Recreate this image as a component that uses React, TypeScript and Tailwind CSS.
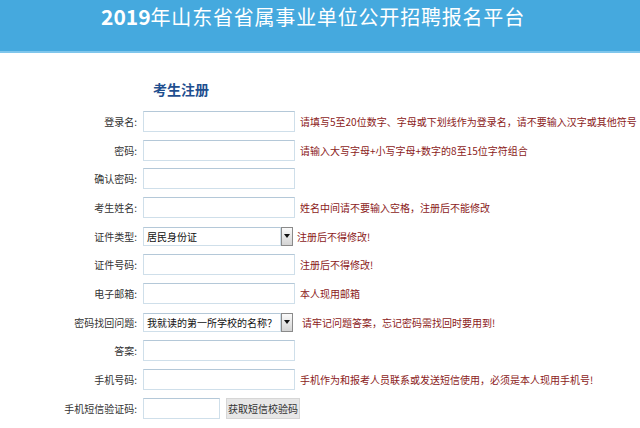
const cjk = "font-['Noto_Sans_CJK_SC','Noto_Sans',sans-serif]";

type Row = {
  label: string;
  kind: "input" | "select" | "sms";
  value?: string;
  hint?: string;
  wide?: boolean;
};

const rows: Row[] = [
  { label: "登录名:", kind: "input", hint: "请填写5至20位数字、字母或下划线作为登录名，请不要输入汉字或其他符号" },
  { label: "密码:", kind: "input", hint: "请输入大写字母+小写字母+数字的8至15位字符组合" },
  { label: "确认密码:", kind: "input" },
  { label: "考生姓名:", kind: "input", hint: "姓名中间请不要输入空格，注册后不能修改" },
  { label: "证件类型:", kind: "select", value: "居民身份证", hint: "注册后不得修改!" },
  { label: "证件号码:", kind: "input", hint: "注册后不得修改!" },
  { label: "电子邮箱:", kind: "input", hint: "本人现用邮箱" },
  { label: "密码找回问题:", kind: "select", value: "我就读的第一所学校的名称？", hint: "请牢记问题答案，忘记密码需找回时要用到!", wide: true },
  { label: "答案:", kind: "input" },
  { label: "手机号码:", kind: "input", hint: "手机作为和报考人员联系或发送短信使用，必须是本人现用手机号!" },
  { label: "手机短信验证码:", kind: "sms" },
];

function Field({ row }: { row: Row }) {
  if (row.kind === "select") {
    return (
      <div className="flex items-center">
        <div className="flex h-[19px] w-[138px] items-center border border-[#cfdfea] border-t-[#b4c8d8] bg-white pl-[3px] text-[10px] text-[#111]">
          {row.value}
        </div>
        <div className="flex h-[19px] w-[12px] items-center justify-center border border-[#8a8a8a] bg-gradient-to-b from-[#fafafa] to-[#d4d4d4]">
          <svg width="6" height="4" viewBox="0 0 6 4">
            <path d="M0 0 L6 0 L3 4 Z" fill="#111" />
          </svg>
        </div>
      </div>
    );
  }
  if (row.kind === "sms") {
    return (
      <div className="flex items-center gap-[6px]">
        <input className="h-[21px] w-[77px] border border-[#cfdfea] border-t-[#b4c8d8] bg-white outline-none" />
        <button className="h-[21px] w-[74px] border border-[#d6d6d6] bg-[#e7e7e7] text-[10px] text-[#333]">
          获取短信校验码
        </button>
      </div>
    );
  }
  return (
    <input className="h-[21px] w-[152px] border border-[#cfdfea] border-t-[#b4c8d8] bg-white outline-none" />
  );
}

export default function App() {
  return (
    <div className={`min-h-screen w-full bg-white ${cjk}`}>
      <div className="h-[53px] border-b-2 border-[#7fc6ec] bg-[#45a9de]">
        <h1 className="flex h-[34px] items-center pl-[101px] text-[20px] font-normal tracking-[0.8px] text-white">
          <span className="font-bold tracking-[0px] text-[21px]">2019</span>
          <span>年山东省省属事业单位公开招聘报名平台</span>
        </h1>
      </div>

      <div className="pl-[153px] pt-[26px] text-[14px] font-bold leading-[20px] text-[#1f4f8f]">
        考生注册
      </div>

      <div className="mt-[8px] flex flex-col">
        {rows.map((row) => (
          <div key={row.label} className="flex h-[28.7px] items-center">
            <div className="w-[137px] shrink-0 text-right text-[10px] text-[#333]">
              {row.label}
            </div>
            <div className="ml-[6px] flex items-center">
              <Field row={row} />
              {row.hint && (
                <span
                  className={`text-[10px] whitespace-nowrap text-[#8b1a1a] ${
                    row.kind === "select" ? (row.wide ? "ml-[9px]" : "ml-[4px]") : "ml-[5px]"
                  }`}
                >
                  {row.hint}
                </span>
              )}
            </div>
          </div>
        ))}
      </div>
    </div>
  );
}
